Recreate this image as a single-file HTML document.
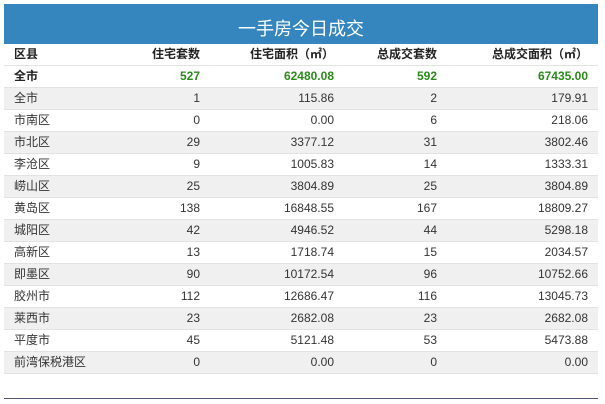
<html><head><style>
body{margin:0;background:#fff;font-family:"Liberation Sans","Noto Sans CJK SC",sans-serif;font-size:12px;color:#333}
.t{position:absolute;left:4px;top:4px;width:594px;height:40px;background:#3586bf;color:#fff;font-size:18px;text-align:center;line-height:50px}
.r{position:absolute;left:4px;width:594px;height:21px;border-bottom:1px solid #e2e2e2;line-height:21px;white-space:nowrap}
.r span{position:absolute;top:0;text-align:right}
.r span:nth-child(1){left:10px;text-align:left}
.r span:nth-child(2){right:398px}
.r span:nth-child(3){right:264px}
.r span:nth-child(4){right:161px}
.r span:nth-child(5){right:10px}
.h{font-weight:bold;color:#222}
.s{font-weight:bold}
.s span{color:#2a8a1a}
.s span:nth-child(1){color:#222}
.g{background:#f0f0f0}
.l{position:absolute;left:4px;top:398px;width:594px;height:1px;background:#557}
</style></head><body>
<div class="t">一手房今日成交</div>
<div class="r h" style="top:44px"><span>区县</span><span>住宅套数</span><span>住宅面积（㎡）</span><span>总成交套数</span><span>总成交面积（㎡）</span></div>
<div class="r s" style="top:66px"><span>全市</span><span>527</span><span>62480.08</span><span>592</span><span>67435.00</span></div>
<div class="r g" style="top:88px"><span>全市</span><span>1</span><span>115.86</span><span>2</span><span>179.91</span></div>
<div class="r" style="top:110px"><span>市南区</span><span>0</span><span>0.00</span><span>6</span><span>218.06</span></div>
<div class="r g" style="top:132px"><span>市北区</span><span>29</span><span>3377.12</span><span>31</span><span>3802.46</span></div>
<div class="r" style="top:154px"><span>李沧区</span><span>9</span><span>1005.83</span><span>14</span><span>1333.31</span></div>
<div class="r g" style="top:176px"><span>崂山区</span><span>25</span><span>3804.89</span><span>25</span><span>3804.89</span></div>
<div class="r" style="top:198px"><span>黄岛区</span><span>138</span><span>16848.55</span><span>167</span><span>18809.27</span></div>
<div class="r g" style="top:220px"><span>城阳区</span><span>42</span><span>4946.52</span><span>44</span><span>5298.18</span></div>
<div class="r" style="top:242px"><span>高新区</span><span>13</span><span>1718.74</span><span>15</span><span>2034.57</span></div>
<div class="r g" style="top:264px"><span>即墨区</span><span>90</span><span>10172.54</span><span>96</span><span>10752.66</span></div>
<div class="r" style="top:286px"><span>胶州市</span><span>112</span><span>12686.47</span><span>116</span><span>13045.73</span></div>
<div class="r g" style="top:308px"><span>莱西市</span><span>23</span><span>2682.08</span><span>23</span><span>2682.08</span></div>
<div class="r" style="top:330px"><span>平度市</span><span>45</span><span>5121.48</span><span>53</span><span>5473.88</span></div>
<div class="r g" style="top:352px"><span>前湾保税港区</span><span>0</span><span>0.00</span><span>0</span><span>0.00</span></div>
<div class="l"></div>
</body></html>
